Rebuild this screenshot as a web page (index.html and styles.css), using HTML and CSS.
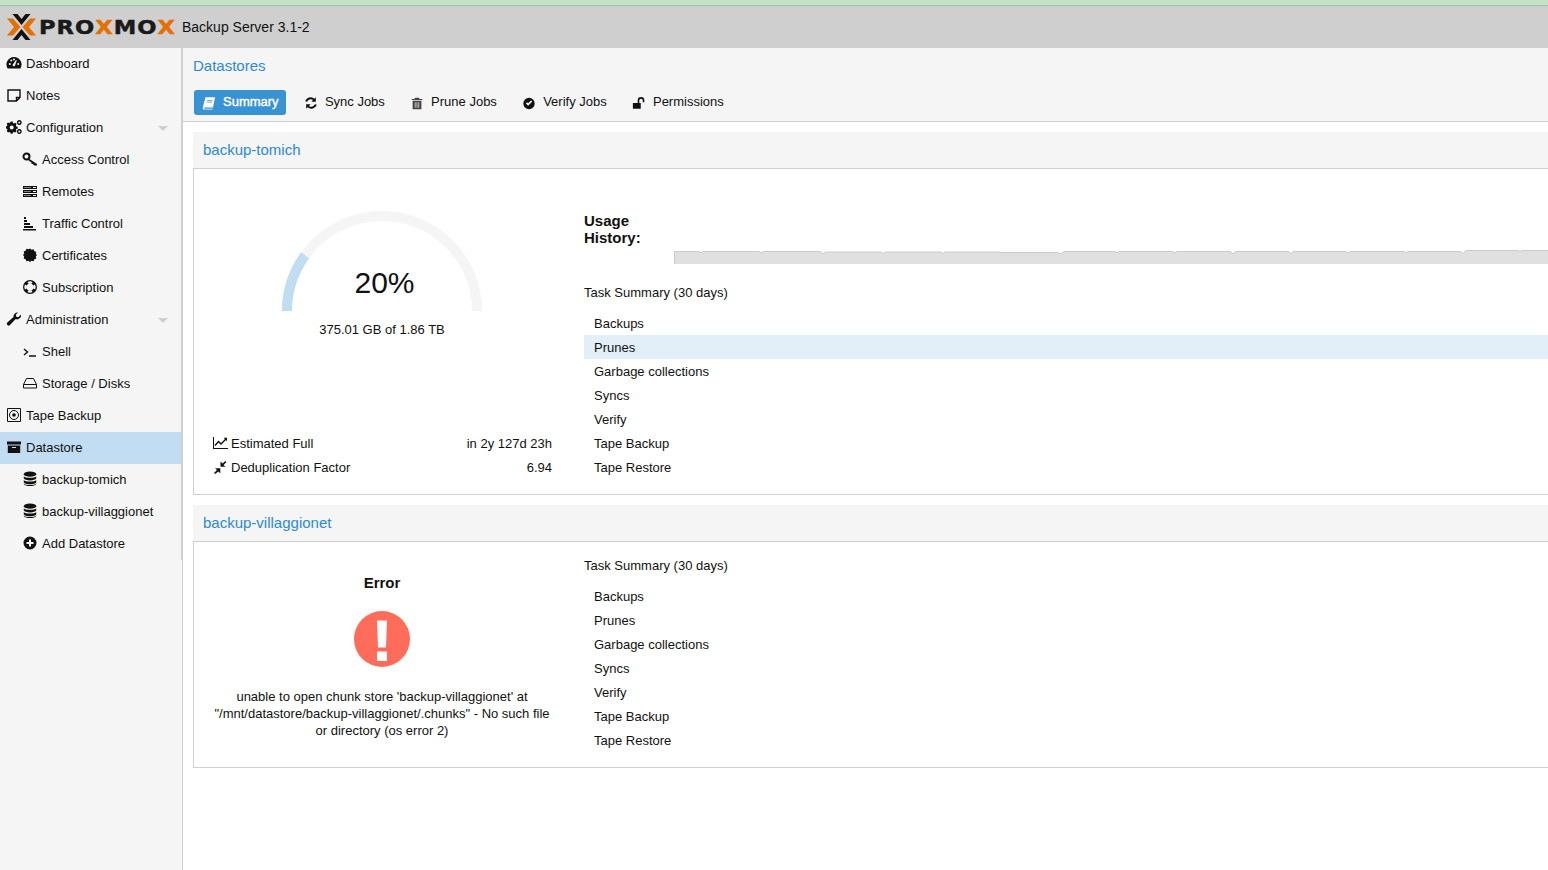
FILE: index.html
```html
<!DOCTYPE html>
<html lang="en">
<head>
<meta charset="utf-8">
<title>Proxmox Backup Server</title>
<link rel="stylesheet" href="styles.css">
</head>
<body>
<svg class="defs" width="0" height="0">
  <symbol id="db" viewBox="0 0 14 16"><ellipse cx="7" cy="3.200" rx="6.200" ry="2.600"/><path d="M.8 5.200c1 2 11.400 2 12.400 0v2.400c-1 2.400-11.400 2.400-12.400 0zM.8 9c1 2 11.400 2 12.400 0v2.400c-1 2.400-11.400 2.400-12.400 0zM.8 12.600c1 2 11.400 2 12.400 0v.4c-1 2.800-11.400 2.800-12.400 0z"/></symbol>
</svg>
<div class="strip"></div>
<header class="topbar">
  <svg class="logo-mark" viewBox="0 0 29 26"><path class="org" d="M0 4.500h6L13.500 13 6 21.500H0L7 13zM29 4.500h-6L15.500 13l7.500 8.500h6L22 13z"/><path d="M5.500 0h5l4 5 4-5h5l-9 11zM5.500 26h5l4-5 4 5h5l-9-11z"/></svg>
  <span class="logo-text">PRO<b>X</b>MO<b>X</b></span>
  <span class="version">Backup Server 3.1-2</span>
</header>
<div class="app">
  <nav class="sidebar">
    <div class="row"><svg class="ic" viewBox="0 0 16 16"><path fill-rule="evenodd" d="M8 2a7.500 7.500 0 0 0-6.400 11.400h12.800A7.500 7.500 0 0 0 8 2zM3.800 9.900a1 1 0 1 1 0-2 1 1 0 0 1 0 2zm1.500-3.300a1 1 0 1 1 0-2 1 1 0 0 1 0 2zM8.800 11a1.300 1.300 0 0 1-2-1.600L10 5l.8.500zm3.400-1.100a1 1 0 1 1 0-2 1 1 0 0 1 0 2zM8 5.400a1 1 0 1 1 0-2 1 1 0 0 1 0 2z"/></svg>Dashboard</div>
    <div class="row"><svg class="ic" viewBox="0 0 16 16"><path class="line" d="M2 3h12v7.500L10.500 14H2zM14 10.500h-3.500V14"/></svg>Notes</div>
    <div class="row"><svg class="ic" viewBox="0 0 16 16"><path fill-rule="evenodd" d="M4.700 4.500h2l.3 1.400 1 .5 1.300-.7 1.300 1.400-.7 1.200.4 1.100 1.400.4v1.900l-1.400.3-.4 1.100.7 1.200-1.400 1.300-1.200-.7-1.100.5-.3 1.300h-1.900l-.3-1.300-1.100-.5-1.200.7L.7 14l.7-1.200-.4-1.100-1-.3V9.500l1-.4.4-1.100L.7 6.800 2 5.400l1.200.7 1.100-.5zM5.700 8.500a2 2 0 1 0 0 4 2 2 0 0 0 0-4z" transform="translate(0 -2)"/><path class="line" d="M13.300 1.800a1.700 1.700 0 1 0 .01 0zM13.300 10.800a1.700 1.700 0 1 0 .01 0z"/></svg>Configuration<i class="caret"></i></div>
    <div class="row sub"><svg class="ic" viewBox="0 0 16 16"><path class="line thick" d="M4.500 2.500a3 3 0 1 1-.01 6 3 3 0 0 1 .01-6z"/><path d="M7.500 8l7.500 5v1.500h-3l-1-1.500H9.500v-1.500L6.500 9.500z"/></svg>Access Control</div>
    <div class="row sub"><svg class="ic" viewBox="0 0 16 16"><path fill-rule="evenodd" d="M1 3h14v3H1zm10 1v1h3V4zM1 7h14v3H1zm10 1v1h3V8zM1 11h14v3H1zm10 1v1h3v-1zM2 4v.600h7V4zM2 8v.600h7V8zM2 12v.600h7V12z"/></svg>Remotes</div>
    <div class="row sub"><svg class="ic" viewBox="0 0 16 16"><path d="M2 2h2v2H2zM2 5h3v2H2zM2 8h6v2H2zM2 11h9v2H2zM1 14h13v1.500H1z"/></svg>Traffic Control</div>
    <div class="row sub"><svg class="ic" viewBox="0 0 16 16"><path d="M8 1.500l1.600 1.300 2-.5.8 1.900 1.900.8-.5 2L15 8l-1.200 1.500.5 2-1.900.8-.8 1.900-2-.5L8 15l-1.600-1.300-2 .5-.8-1.900-1.900-.8.5-2L1 8l1.200-1.500-.5-2 1.900-.8.8-1.900 2 .5z"/></svg>Certificates</div>
    <div class="row sub"><svg class="ic" viewBox="0 0 16 16"><path fill-rule="evenodd" d="M8 1a7 7 0 1 1 0 14A7 7 0 0 1 8 1zM8 4.500a3.500 3.500 0 1 0 0 7 3.500 3.500 0 0 0 0-7zM5.500 2.900l1 2a3.500 3.500 0 0 1 3 0l1-2a5.700 5.700 0 0 0-5 0zM5.500 13.100a5.700 5.700 0 0 0 5 0l-1-2a3.500 3.500 0 0 1-3 0zM2.900 5.500a5.700 5.700 0 0 0 0 5l2-1a3.500 3.500 0 0 1 0-3zM13.100 5.500l-2 1a3.500 3.500 0 0 1 0 3l2 1a5.700 5.700 0 0 0 0-5z"/></svg>Subscription</div>
    <div class="row"><svg class="ic" viewBox="0 0 16 16"><path d="M15 3.500a4 4 0 0 1-5.300 4.600L4 14a1.800 1.800 0 0 1-2.700-2.500L7.500 6A4 4 0 0 1 12 1.500L9.800 3.700l.5 2 2 .5z"/></svg>Administration<i class="caret"></i></div>
    <div class="row sub"><svg class="ic" viewBox="0 0 16 16"><path class="line" d="M2 6l3.500 3L2 12M7 13h7"/></svg>Shell</div>
    <div class="row sub"><svg class="ic" viewBox="0 0 16 16"><path class="line thin" d="M4.500 3.500h7l3 6v3.500H1.500V9.500zM1.500 9.500h13"/></svg>Storage / Disks</div>
    <div class="row"><svg class="ic" viewBox="0 0 16 16"><path class="line thin" d="M1.500 1.500h13v13h-13z"/><circle class="line thin" cx="8" cy="8" r="4.500"/><circle cx="8" cy="8" r="1.800"/></svg>Tape Backup</div>
    <div class="row active"><svg class="ic" viewBox="0 0 16 16"><path fill-rule="evenodd" d="M1 2.500h14v3H1zM1.800 6.500h12.400V14H1.800zM6 8v1h4V8z"/></svg>Datastore</div>
    <div class="row sub"><svg class="ic"><use href="#db"/></svg>backup-tomich</div>
    <div class="row sub"><svg class="ic"><use href="#db"/></svg>backup-villaggionet</div>
    <div class="row sub"><svg class="ic" viewBox="0 0 16 16"><path fill-rule="evenodd" d="M8 1.500a6.500 6.500 0 1 1 0 13 6.500 6.500 0 0 1 0-13zM7 4.500v2.500H4.500v2H7v2.500h2V9h2.500V7H9V4.500z"/></svg>Add Datastore</div>
  </nav>
  <main class="main">
    <div class="titlebar">
      <h1 class="page-title">Datastores</h1>
      <div class="tabs">
        <div class="tab selected"><svg class="ic" viewBox="0 0 16 16"><path fill-rule="evenodd" d="M4 1.500h11L12.500 13H2.800a1.300 1.300 0 0 0 0 1.500H12l.4 0-.3 1H2.500C1 15.500.5 14 1 12.500zM6 4.500l-.2.800h6l.2-.8zM5.500 6.500l-.2.800h6l.2-.8z"/></svg>Summary</div>
        <div class="tab"><svg class="ic" viewBox="0 0 16 16"><path d="M13.500 1.500v5h-5l1.800-1.800A4.300 4.300 0 0 0 3.600 6.500l-2.200-.4A6.500 6.500 0 0 1 11.900 3.200zM2.500 14.500v-5h5L5.700 11.300a4.300 4.300 0 0 0 6.700-1.800l2.200.4A6.500 6.500 0 0 1 4.100 12.800z"/></svg>Sync Jobs</div>
        <div class="tab"><svg class="ic" viewBox="0 0 16 16"><path fill-rule="evenodd" d="M6 2h4l1 1.500h3v1.200H2V3.500h3zM3 5.500h10V15H3zM5.500 7v6.500h.8V7zM7.600 7v6.500h.8V7zM9.700 7v6.500h.8V7z" class="grey"/></svg>Prune Jobs</div>
        <div class="tab"><svg class="ic" viewBox="0 0 16 16"><path fill-rule="evenodd" d="M8 2a6.500 6.500 0 1 1 0 13A6.500 6.500 0 0 1 8 2zM4.500 8.500L7 11l4.700-4.700-1.300-1.300L7 8.400 5.800 7.200z"/></svg>Verify Jobs</div>
        <div class="tab"><svg class="ic" viewBox="0 0 16 16"><path d="M1 8h9v6.500H1zM6.500 8V5a3.800 3.800 0 0 1 7.600 0v2h-1.800V5a2 2 0 0 0-4 0v3z"/></svg>Permissions</div>
      </div>
    </div>
    <div class="content">
      <section class="panel">
        <h2 class="panel-head">backup-tomich</h2>
        <div class="panel-body first">
          <div class="left">
            <div class="gauge">
              <svg class="gauge-arc" viewBox="0 0 200 100"><path class="gauge-bg" d="M5 100a95 95 0 0 1 190 0"/><path class="gauge-val" d="M5 100A95 95 0 0 1 23.100 44.200"/></svg>
              <div class="gauge-num">20%</div>
              <div class="gauge-text">375.01 GB of 1.86 TB</div>
            </div>
            <div class="stats">
              <div class="stat"><svg class="ic" viewBox="0 0 16 16"><path d="M1 2h1v11h14v1H1z"/><path class="line" d="M3 10.500L6.500 6.500l2.500 2.500L14 4"/><path d="M15 2.800v3.400l-3.400-3.400z"/></svg><span class="stat-name">Estimated Full</span><span>in 2y 127d 23h</span></div>
              <div class="stat"><svg class="ic" viewBox="0 0 16 16"><path d="M3 15l-1-1 3-3-2-1.800h5.300v5.300L6.500 12.500zM13.500 2l1 1-3 3 2 1.800H8.500V2.500L10.500 4.500z"/></svg><span class="stat-name">Deduplication Factor</span><span>6.94</span></div>
            </div>
          </div>
          <div class="right">
            <div class="usage">
              <div class="usage-label">Usage History:</div>
              <svg class="usage-chart" viewBox="0 0 874 16" preserveAspectRatio="none"><path class="chart-fill" d="M.5 16V3.500H25l2 1.500 2-1.500H85l2 1.500 2-1.500H146l3 2 3-1.500H207l2 1.500 2-1.500H267l2 1.500 2-1.500H326V4.500H384l3 1.500 3-2.500H441l2 1.500 2-1.500H499l2 1.500 2-1.500H556l3 2 3-2H614l3 2 2-2H672l2 1.500 2-1.500H730l2 1.500 2-1.500H787l2 2 3-3H844l2 1.500 2-1.500H874V16z"/><path class="chart-line" d="M.5 16V3.500H25l2 1.500 2-1.500H85l2 1.500 2-1.500H146l3 2 3-1.500H207l2 1.500 2-1.500H267l2 1.500 2-1.500H326V4.500H384l3 1.500 3-2.500H441l2 1.500 2-1.500H499l2 1.500 2-1.500H556l3 2 3-2H614l3 2 2-2H672l2 1.500 2-1.500H730l2 1.500 2-1.500H787l2 2 3-3H844l2 1.500 2-1.500H874"/></svg>
            </div>
            <div class="task-title">Task Summary (30 days)</div>
            <ul class="tasks">
              <li>Backups</li><li class="hl">Prunes</li><li>Garbage collections</li><li>Syncs</li><li>Verify</li><li>Tape Backup</li><li>Tape Restore</li>
            </ul>
          </div>
        </div>
      </section>
      <section class="panel">
        <h2 class="panel-head">backup-villaggionet</h2>
        <div class="panel-body second">
          <div class="left error">
            <div class="error-title">Error</div>
            <svg class="error-icon" viewBox="0 0 56 56"><circle class="err-c" cx="28" cy="28" r="28"/><path class="err-m" d="M23 9.500h10l-1 27h-8zM23 40.500h10v9.500H23z"/></svg>
            <p class="error-text">unable to open chunk store 'backup-villaggionet' at "/mnt/datastore/backup-villaggionet/.chunks" - No such file or directory (os error 2)</p>
          </div>
          <div class="right">
            <div class="task-title">Task Summary (30 days)</div>
            <ul class="tasks">
              <li>Backups</li><li>Prunes</li><li>Garbage collections</li><li>Syncs</li><li>Verify</li><li>Tape Backup</li><li>Tape Restore</li>
            </ul>
          </div>
        </div>
      </section>
    </div>
  </main>
</div>
</body>
</html>
```
FILE: styles.css
```css
html, body { margin: 0; height: 100%; overflow: hidden; }
body {
  font: 13px/17px "Liberation Sans", Arial, sans-serif;
  color: #111;
  background: #fff;
  display: flex;
  flex-direction: column;
}
.defs { position: absolute; }
.strip { height: 5px; background: #c5e3c6; border-bottom: 1px solid #a9bda9; flex: none; }
.topbar {
  height: 42px; flex: none; background: #cfcfcf;
  display: flex; align-items: center; padding-left: 7px;
}
.logo-mark { width: 29px; height: 26px; flex: none; fill: #111; }
.logo-mark .org { fill: #e57000; }
.logo-text {
  font: bold 20px/26px "DejaVu Sans", sans-serif;
  letter-spacing: .9px; color: #1a1a1a; margin-left: 3px; width: 143px; flex: none;
  -webkit-text-stroke: .5px currentColor;
  transform: scaleX(1.13); transform-origin: left center;
}
.logo-text b { color: #e57000; }
.version { font-size: 14px; color: #111; }
.app { flex: 1; display: flex; min-height: 0; }
.sidebar {
  width: 182px; flex: none; background: #f5f5f5;
  border-right: 1px solid #cfcfcf; position: relative;
}
.sidebar::after {
  content: ""; position: absolute; right: -1px; top: 0; width: 2px; height: 512px; background: #cfcfcf;
}
.row { height: 32px; box-sizing: border-box; padding: 0 0 2px 6px; display: flex; align-items: center; position: relative; }
.row.sub { padding-left: 22px; }
.row.active { background: #c2ddf2; }
.ic { width: 16px; height: 16px; flex: none; margin-right: 4px; fill: #111; }
.line { fill: none; stroke: #111; stroke-width: 1.400; }
.line.thin { stroke-width: 1; }
.line.thick { stroke-width: 2; }
.grey { fill: #444; }
.caret {
  position: absolute; right: 14px; top: 14px; width: 0; height: 0;
  border: 5.500px solid transparent; border-top-color: #cfcfcf; border-bottom: 0;
}
.main { flex: 1; min-width: 0; display: flex; flex-direction: column; }
.titlebar { height: 73px; flex: none; background: #f5f5f5; border-bottom: 1px solid #cfcfcf; padding-left: 10px; }
.page-title { margin: 0; padding-top: 9px; font-weight: normal; font-size: 15px; line-height: 18px; color: #2b8ad6; }
.tabs { display: flex; gap: 10.250px; margin-top: 15px; margin-left: 1px; }
.tab { height: 25px; box-sizing: border-box; padding: 0 7px 2px 8px; display: flex; align-items: center; white-space: nowrap; }
.tab .ic { width: 14px; height: 14px; margin: 3px 7px 0 0; }
.tab.selected { background: #3892d4; color: #fff; border-radius: 3px; -webkit-text-stroke: .4px #fff; }
.tab.selected .ic { fill: #fff; margin-top: 2px; }
.content { padding: 10px 0 0 10px; overflow: hidden; display: flex; flex-direction: column; gap: 10px; }
.panel { width: 1400px; flex: none; }
.panel-head {
  margin: 0; height: 36px; background: #f5f5f5; border-bottom: 1px solid #cfcfcf;
  padding-left: 10px; font-weight: normal; font-size: 15px; line-height: 35px; color: #2b8ad6;
}
.panel-body { border-left: 1px solid #cfcfcf; border-bottom: 1px solid #cfcfcf; display: flex; }
.panel-body.first { height: 325px; }
.panel-body.second { height: 225px; }
.left { width: 340px; flex: none; padding: 0 18px; display: flex; flex-direction: column; }
.first .left { justify-content: space-between; padding-bottom: 15px; }
.gauge { position: relative; padding-top: 42px; text-align: center; }
.gauge-arc { display: block; width: 200px; height: 100px; margin: 0 auto; }
.gauge-bg, .gauge-val { fill: none; stroke-width: 10; }
.gauge-bg { stroke: #f5f5f5; }
.gauge-val { stroke: #c2ddf2; }
.gauge-num { position: absolute; left: 5px; right: 0; top: 96px; font-size: 30px; line-height: 36px; }
.gauge-text { line-height: 17px; margin-top: 10px; }
.stats { display: flex; flex-direction: column; }
.stat { height: 24px; display: flex; align-items: center; }
.stat .ic { margin-right: 3px; }
.stat-name { flex: 1; }
.right { flex: 1; min-width: 0; padding-left: 14px; }
.first .right { padding-top: 43px; }
.second .right { padding-top: 15px; }
.usage { display: flex; height: 51px; }
.usage-label { width: 90px; flex: none; font-weight: bold; font-size: 15px; line-height: 17px; box-sizing: border-box; padding-right: 20px; }
.usage-chart { width: 874px; height: 16px; margin-top: 36px; flex: none; }
.chart-fill { fill: #e0e0e0; }
.chart-line { fill: none; stroke: #cbcbcb; stroke-width: 1; stroke-linejoin: round; }
.task-title { margin-top: 21px; line-height: 17px; }
.second .task-title { margin-top: 0; }
.tasks { list-style: none; margin: 10px 0 0; padding: 0; }
.tasks li { height: 24px; line-height: 26px; padding-left: 10px; }
.tasks li.hl { background: #e2eff9; }
.error { align-items: center; text-align: center; padding-top: 32px; }
.error-title { font-weight: bold; font-size: 15px; line-height: 17px; }
.error-icon { width: 56px; height: 56px; margin-top: 20px; }
.err-c { fill: #ff6c59; }
.err-m { fill: #fff; }
.error-text { margin: 21px 0 0; line-height: 17px; }
```
